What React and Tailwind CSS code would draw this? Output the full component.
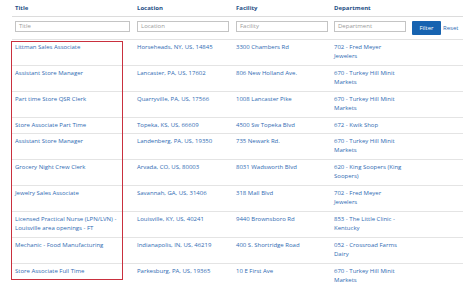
import React from "react";

const jobs = [
    { title: ["Littman Sales Associate"], location: "Horseheads, NY, US, 14845", facility: "3300 Chambers Rd", dept: ["702 - Fred Meyer", "Jewelers"] },
    { title: ["Assistant Store Manager"], location: "Lancaster, PA, US, 17602", facility: "806 New Holland Ave.", dept: ["670 - Turkey Hill Minit", "Markets"] },
    { title: ["Part time Store QSR Clerk"], location: "Quarryville, PA, US, 17566", facility: "1008 Lancaster Pike", dept: ["670 - Turkey Hill Minit", "Markets"] },
    { title: ["Store Associate Part Time"], location: "Topeka, KS, US, 66609", facility: "4500 Sw Topeka Blvd", dept: ["672 - Kwik Shop"] },
    { title: ["Assistant Store Manager"], location: "Landenberg, PA, US, 19350", facility: "735 Newark Rd.", dept: ["670 - Turkey Hill Minit", "Markets"] },
    { title: ["Grocery Night Crew Clerk"], location: "Arvada, CO, US, 80003", facility: "8031 Wadsworth Blvd", dept: ["620 - King Soopers (King", "Soopers)"] },
    { title: ["Jewelry Sales Associate"], location: "Savannah, GA, US, 31406", facility: "318 Mall Blvd", dept: ["702 - Fred Meyer", "Jewelers"] },
    { title: ["Licensed Practical Nurse (LPN/LVN) -", "Louisville area openings - FT"], location: "Louisville, KY, US, 40241", facility: "9440 Brownsboro Rd", dept: ["853 - The Little Clinic -", "Kentucky"] },
    { title: ["Mechanic - Food Manufacturing"], location: "Indianapolis, IN, US, 46219", facility: "400 S. Shortridge Road", dept: ["052 - Crossroad Farms", "Dairy"] },
    { title: ["Store Associate Full Time"], location: "Parkesburg, PA, US, 19365", facility: "10 E First Ave", dept: ["670 - Turkey Hill Minit", "Markets"] },
];

function Lines({ lines }) {
    return lines.map((l, i) => <div key={i}>{l}</div>);
}

export default function App() {
    return (
        <div className="relative w-[474px] h-[287px] overflow-hidden bg-white pl-[12px] text-[6px] leading-[8px]" style={{ fontFamily: '"Open Sans", Arial, sans-serif' }}>
            {/* Encabezado */}
            <div className="w-[451px] grid grid-cols-[122px_99px_98px_78px_54px] border-b border-[#dcdcdc] pt-[4px] pb-[4px] font-bold text-[#1f4f86]">
                <div className="pl-[3px]">Title</div>
                <div className="pl-[3px]">Location</div>
                <div className="pl-[3px]">Facility</div>
                <div className="pl-[3px]">Department</div>
                <div></div>
            </div>

            {/* Filtros */}
            <div className="w-[451px] grid grid-cols-[122px_99px_98px_78px_54px] items-start border-b border-[#e2e2e2] pt-[4px] pb-[4px]">
                <div className="pl-[3px] pr-[4px]">
                    <div className="h-[11px] border border-[#c4c4c4] pl-[3px] leading-[9px] text-[#9a9a9a]">Title</div>
                </div>
                <div className="pl-[3px] pr-[4px]">
                    <div className="h-[11px] border border-[#c4c4c4] pl-[3px] leading-[9px] text-[#9a9a9a]">Location</div>
                </div>
                <div className="pl-[3px] pr-[3px]">
                    <div className="h-[11px] border border-[#c4c4c4] pl-[3px] leading-[9px] text-[#9a9a9a]">Facility</div>
                </div>
                <div className="pl-[3px] pr-[3px]">
                    <div className="h-[11px] border border-[#c4c4c4] pl-[3px] leading-[9px] text-[#9a9a9a]">Department</div>
                </div>
                <div className="flex items-center pl-[3px]">
                    <button className="w-[29px] h-[14px] bg-[#1763b0] text-white text-[6px] rounded-[1px]">Filter</button>
                    <span className="ml-[2px] text-[#2f6bb3]">Reset</span>
                </div>
            </div>

            {/* Filas */}
            {jobs.map((job, i) => {
                const dosLineas = job.title.length > 1 || job.dept.length > 1;
                return (
                    <div
                        key={i}
                        className={
                            "w-[451px] grid grid-cols-[122px_99px_98px_78px_54px] border-b border-[#e4e4e4] leading-[9px] pt-[3px] text-[#2f6bb3] " +
                            (dosLineas ? "pb-[4px]" : "pb-[3px]")
                        }
                    >
                        <div className="pl-[3px]"><Lines lines={job.title} /></div>
                        <div className="pl-[3px]">{job.location}</div>
                        <div className="pl-[3px]">{job.facility}</div>
                        <div className="pl-[3px]"><Lines lines={job.dept} /></div>
                        <div></div>
                    </div>
                );
            })}

            {/* Recuadro rojo */}
            <div className="absolute left-[11px] top-[41px] w-[112px] h-[239px] border-[1.5px] border-[#c9303e]"></div>
        </div>
    );
}
